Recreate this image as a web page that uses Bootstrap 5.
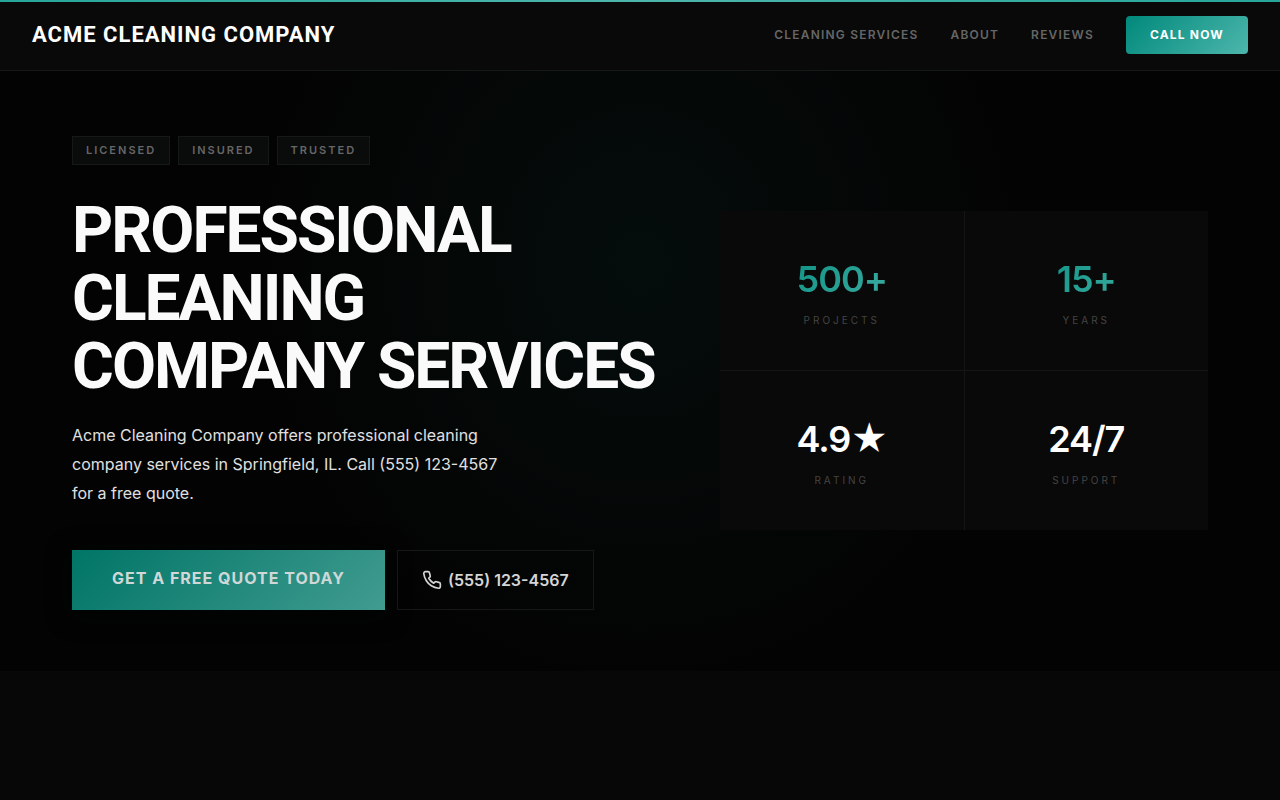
<!DOCTYPE html>
<html lang="en">
<head>
<meta charset="utf-8">
<meta name="viewport" content="width=device-width, initial-scale=1">
<title>Acme Cleaning Company</title>
<link href="https://cdn.jsdelivr.net/npm/bootstrap@5.3.0/dist/css/bootstrap.min.css" rel="stylesheet">
<style>
:root { --teal: #00897b; --teal-light: #4db6ac; --line: #161818; }
body { background: #070707; color: #fff; font-family: Inter, sans-serif; }
.site-nav { background: #090909; border-bottom: 1px solid var(--line); padding: 14px 32px 16px; }
.nav-items { gap: 32px; }
.topline { height: 2px; background: linear-gradient(90deg, #26a69a, #4db6ac, #26a69a); }
.site-brand { font: 700 22px/32px Roboto, sans-serif; letter-spacing: 1px; color: #fff; text-decoration: none; }
.site-link { font-size: 12px; font-weight: 600; line-height: 18px; letter-spacing: 0.1em; color: #666; text-decoration: none; }
.call-btn { background: linear-gradient(135deg, var(--teal), var(--teal-light)); color: #fff; font-size: 12px; font-weight: 700; line-height: 18px; letter-spacing: 0.1em; padding: 10px 24px; border: 0; border-radius: 4px; }
.hero { background: radial-gradient(ellipse 380px 420px at 50% 32%, #040d0c, #040807 50%, #030303 100%); padding: 65px 72px 61px; }
.hero-grid { display: grid; grid-template-columns: 73fr 61fr; gap: 64px; align-items: center; }
.tag { background: #0a0b0b; border: 1px solid var(--line); color: #666; font-size: 11px; font-weight: 600; line-height: 17px; letter-spacing: 2px; padding: 5px 13px; }
.hero-title { font: 700 64px/68px Roboto, sans-serif; letter-spacing: -2px; color: #fafafa; margin: 32px 0 20px; }
.hero-text { font-size: 16px; line-height: 29px; color: #e0e0e0; max-width: 440px; margin-bottom: 42px; }
.actions { gap: 12px; }
.quote-btn { background: linear-gradient(135deg, #007566, #419b90); color: #d0d8d7; border: 0; font-size: 16px; font-weight: 700; line-height: 24px; letter-spacing: 1px; padding: 16px 40px 20px; box-shadow: 0 4px 24px #010505; }
.phone-btn { color: #d5d5d5; border: 1px solid var(--line); font-size: 16px; font-weight: 600; line-height: 24px; padding: 17px 24px; gap: 6px; text-decoration: none; }
.stats { display: grid; grid-template-columns: 1fr 1fr; gap: 1px; background: #151515; margin-bottom: 6px; }
.stat { background: #090909; text-align: center; padding: 48px 24px 42px; }
.stat-value { font-size: 36px; font-weight: 600; line-height: 40px; letter-spacing: -1px; }
.stat-value.accent { background: linear-gradient(135deg, var(--teal), var(--teal-light)); -webkit-background-clip: text; background-clip: text; color: transparent; }
.stat-label { font-size: 10px; line-height: 16px; letter-spacing: 3px; color: #444; margin-top: 13px; }
@media (max-width: 991px) { .hero-grid { grid-template-columns: 1fr; } .hero { padding: 40px 24px; } .hero-title { font-size: 40px; line-height: 44px; } }
</style>
</head>
<body>
<div class="topline"></div>
<nav class="site-nav d-flex flex-wrap align-items-center justify-content-between">
  <a class="site-brand" href="#">ACME CLEANING COMPANY</a>
  <div class="nav-items d-flex flex-wrap align-items-center">
    <a class="site-link" href="#services">CLEANING SERVICES</a>
    <a class="site-link" href="#about">ABOUT</a>
    <a class="site-link" href="#reviews">REVIEWS</a>
    <button class="call-btn" type="button">CALL NOW</button>
  </div>
</nav>
<main class="hero">
  <div class="hero-grid">
    <section>
      <div class="d-flex flex-wrap gap-2">
        <span class="tag">LICENSED</span><span class="tag">INSURED</span><span class="tag">TRUSTED</span>
      </div>
      <h1 class="hero-title">PROFESSIONAL CLEANING<br>COMPANY SERVICES</h1>
      <p class="hero-text">Acme Cleaning Company offers professional cleaning company services in Springfield, IL. Call (555) 123-4567 for a free quote.</p>
      <div class="actions d-flex flex-wrap">
        <button class="quote-btn" type="button">GET A FREE QUOTE TODAY</button>
        <a class="phone-btn d-flex align-items-center" href="tel:5551234567">
          <svg width="20" height="20" viewBox="0 0 24 24" fill="none" stroke="currentColor" stroke-width="2" stroke-linecap="round" stroke-linejoin="round" aria-hidden="true"><path d="M22 16.92v3a2 2 0 0 1-2.18 2 19.79 19.79 0 0 1-8.63-3.07 19.5 19.5 0 0 1-6-6 19.79 19.79 0 0 1-3.07-8.67A2 2 0 0 1 4.11 2h3a2 2 0 0 1 2 1.72 12.84 12.84 0 0 0 .7 2.81 2 2 0 0 1-.45 2.11L8.09 9.91a16 16 0 0 0 6 6l1.27-1.27a2 2 0 0 1 2.11-.45 12.84 12.84 0 0 0 2.81.7A2 2 0 0 1 22 16.92z"/></svg>
          (555) 123-4567</a>
      </div>
    </section>
    <section class="stats">
      <div class="stat"><div class="stat-value accent">500+</div><div class="stat-label">PROJECTS</div></div>
      <div class="stat"><div class="stat-value accent">15+</div><div class="stat-label">YEARS</div></div>
      <div class="stat"><div class="stat-value">4.9★</div><div class="stat-label">RATING</div></div>
      <div class="stat"><div class="stat-value">24/7</div><div class="stat-label">SUPPORT</div></div>
    </section>
  </div>
</main>
<script src="https://cdn.jsdelivr.net/npm/bootstrap@5.3.0/dist/js/bootstrap.bundle.min.js"></script>
</body>
</html>
